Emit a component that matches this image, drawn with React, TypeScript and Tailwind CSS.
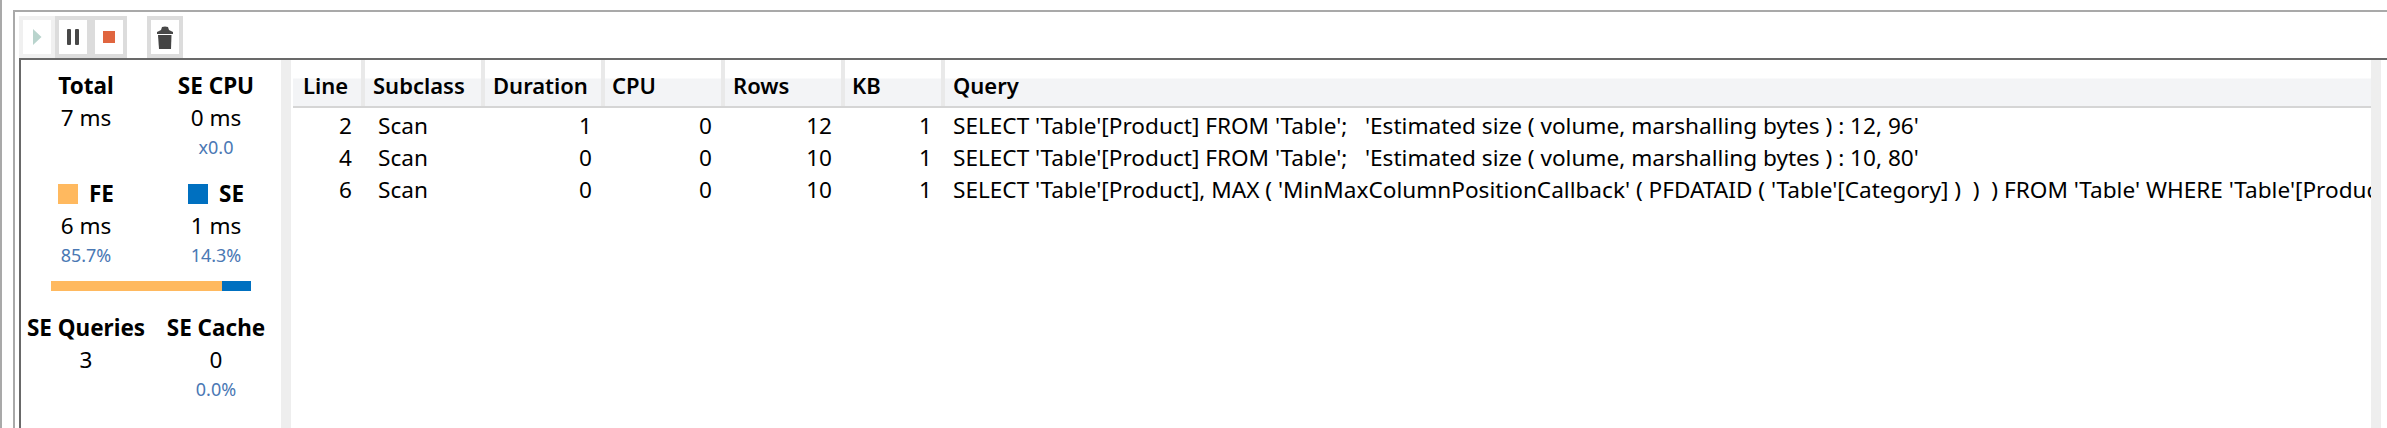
const font = "font-['Noto_Sans','Open_Sans',sans-serif]";

const columns = [
  { label: 'Line', width: 'w-[72px]', pad: 'pl-[10px]' },
  { label: 'Subclass', width: 'w-[120px]', pad: 'pl-[8px]' },
  { label: 'Duration', width: 'w-[120px]', pad: 'pl-[8px]' },
  { label: 'CPU', width: 'w-[120px]', pad: 'pl-[7px]' },
  { label: 'Rows', width: 'w-[120px]', pad: 'pl-[8px]' },
  { label: 'KB', width: 'w-[100px]', pad: 'pl-[7px]' },
];

const rows = [
  { line: '2', dur: '1', cpu: '0', rows: '12', kb: '1', q: "SELECT 'Table'[Product] FROM 'Table';   'Estimated size ( volume, marshalling bytes ) : 12, 96'" },
  { line: '4', dur: '0', cpu: '0', rows: '10', kb: '1', q: "SELECT 'Table'[Product] FROM 'Table';   'Estimated size ( volume, marshalling bytes ) : 10, 80'" },
  { line: '6', dur: '0', cpu: '0', rows: '10', kb: '1', q: "SELECT 'Table'[Product], MAX ( 'MinMaxColumnPositionCallback' ( PFDATAID ( 'Table'[Category] )  )  ) FROM 'Table' WHERE 'Table'[Product] IN ( 'A', 'B' )" },
];

function Stat({ label, value, sub, swatch }: { label: string; value: string; sub?: string; swatch?: string }) {
  return (
    <div className="flex w-[130px] flex-col items-center whitespace-nowrap">
      <div className="flex h-[33px] items-center justify-center text-[22.5px] font-bold text-black">
        {swatch && <span className={`mr-[11px] h-[20px] w-[20px] ${swatch}`} />}
        {label}
      </div>
      <div className="h-[32px] text-[22.5px] leading-[32px] text-black">{value}</div>
      {sub && <div className="h-[26px] text-[18px] leading-[26px] text-[#4a78b4]">{sub}</div>}
    </div>
  );
}

function ToolButton({ children, frame }: { children: React.ReactNode; frame: string }) {
  return (
    <div className={`flex h-[42px] w-[36px] items-center justify-center ${frame}`}>
      <div className="flex h-[34px] w-[28px] items-center justify-center bg-white">{children}</div>
    </div>
  );
}

export default function App() {
  return (
    <div className={`h-[428px] w-[2387px] overflow-hidden bg-white ${font}`}>
      <div className="h-full border-l-2 border-[#a9a9a9] pl-[11px] pt-[10px]">
        <div className="h-full border-l-2 border-t-2 border-[#a9a9a9] pl-[4px] pt-[4px]">
          <div className="flex h-[42px]">
            <ToolButton frame="bg-[#f0f0f0]">
              <svg width="10" height="16" viewBox="0 0 10 16"><path d="M1 0 L9.5 8 L1 16 Z" fill="#b9d4cd" /></svg>
            </ToolButton>
            <ToolButton frame="bg-[#dcdcdc]">
              <svg width="12" height="16" viewBox="0 0 12 16"><rect x="0" y="0" width="4" height="16" rx="1" fill="#484848" /><rect x="8" y="0" width="4" height="16" rx="1" fill="#484848" /></svg>
            </ToolButton>
            <ToolButton frame="bg-[#dcdcdc]">
              <svg width="12" height="12" viewBox="0 0 12 12"><rect width="12" height="12" fill="#e0653f" /></svg>
            </ToolButton>
            <div className="ml-[20px]">
              <ToolButton frame="bg-[#dcdcdc]">
                <svg width="16" height="23" viewBox="0 0 16 23"><path d="M0 8 L0 6 L4 4 L5 1 Q8 0 11 1 L12 4 L16 6 L16 8 Z" fill="#484848" /><path d="M1 9 H14.5 L14 23 H2 Z" fill="#444" /></svg>
              </ToolButton>
            </div>
          </div>
          <div className="flex h-full border-l-2 border-t-2 border-[#696969]">
            <div className="w-[260px] shrink-0 pt-[9px]">
              <div className="flex">
                <Stat label="Total" value="7 ms" />
                <Stat label="SE CPU" value="0 ms" sub="x0.0" />
              </div>
              <div className="mt-[17px] flex">
                <Stat label="FE" value="6 ms" sub="85.7%" swatch="bg-[#ffb95f]" />
                <Stat label="SE" value="1 ms" sub="14.3%" swatch="bg-[#0070c0]" />
              </div>
              <div className="ml-[30px] mt-[13px] flex h-[10px] w-[200px]">
                <div className="w-[171px] bg-[#ffb95f]" />
                <div className="flex-1 bg-[#0070c0]" />
              </div>
              <div className="mt-[20px] flex">
                <Stat label="SE Queries" value="3" />
                <Stat label="SE Cache" value="0" sub="0.0%" />
              </div>
            </div>
            <div className="w-[10px] shrink-0 bg-[#eeeeee]" />
            <div className="w-[2px] shrink-0 bg-white" />
            <div className="w-[2078px] shrink-0 overflow-hidden">
              <div className="flex h-[48px] border-b-2 border-[#d5d5d5] bg-[linear-gradient(#ffffff_0,#ffffff_18px,#f3f4f6_19px,#f3f4f6_100%)]">
                {columns.map((c) => (
                  <div key={c.label} className={`flex shrink-0 items-center border-r-4 border-[#e9e9e9] pt-[5px] text-[22px] font-semibold text-black ${c.width} ${c.pad}`}>
                    {c.label}
                  </div>
                ))}
                <div className="flex flex-1 items-center pl-[8px] pt-[5px] text-[22px] font-semibold text-black">Query</div>
              </div>
              <div className="pt-[2px]">
                {rows.map((r) => (
                  <div key={r.line} className="flex h-[32px] items-center whitespace-pre text-[22.6px] leading-[32px] text-black">
                    <div className="w-[59px] shrink-0 text-right">{r.line}</div>
                    <div className="w-[120px] shrink-0 pl-[26px]">Scan</div>
                    <div className="w-[120px] shrink-0 text-right">{r.dur}</div>
                    <div className="w-[120px] shrink-0 text-right">{r.cpu}</div>
                    <div className="w-[120px] shrink-0 text-right">{r.rows}</div>
                    <div className="w-[100px] shrink-0 text-right">{r.kb}</div>
                    <div className="pl-[21px]">{r.q}</div>
                  </div>
                ))}
              </div>
            </div>
            <div className="w-[10px] shrink-0 bg-[#eeeeee]" />
          </div>
        </div>
      </div>
    </div>
  );
}
